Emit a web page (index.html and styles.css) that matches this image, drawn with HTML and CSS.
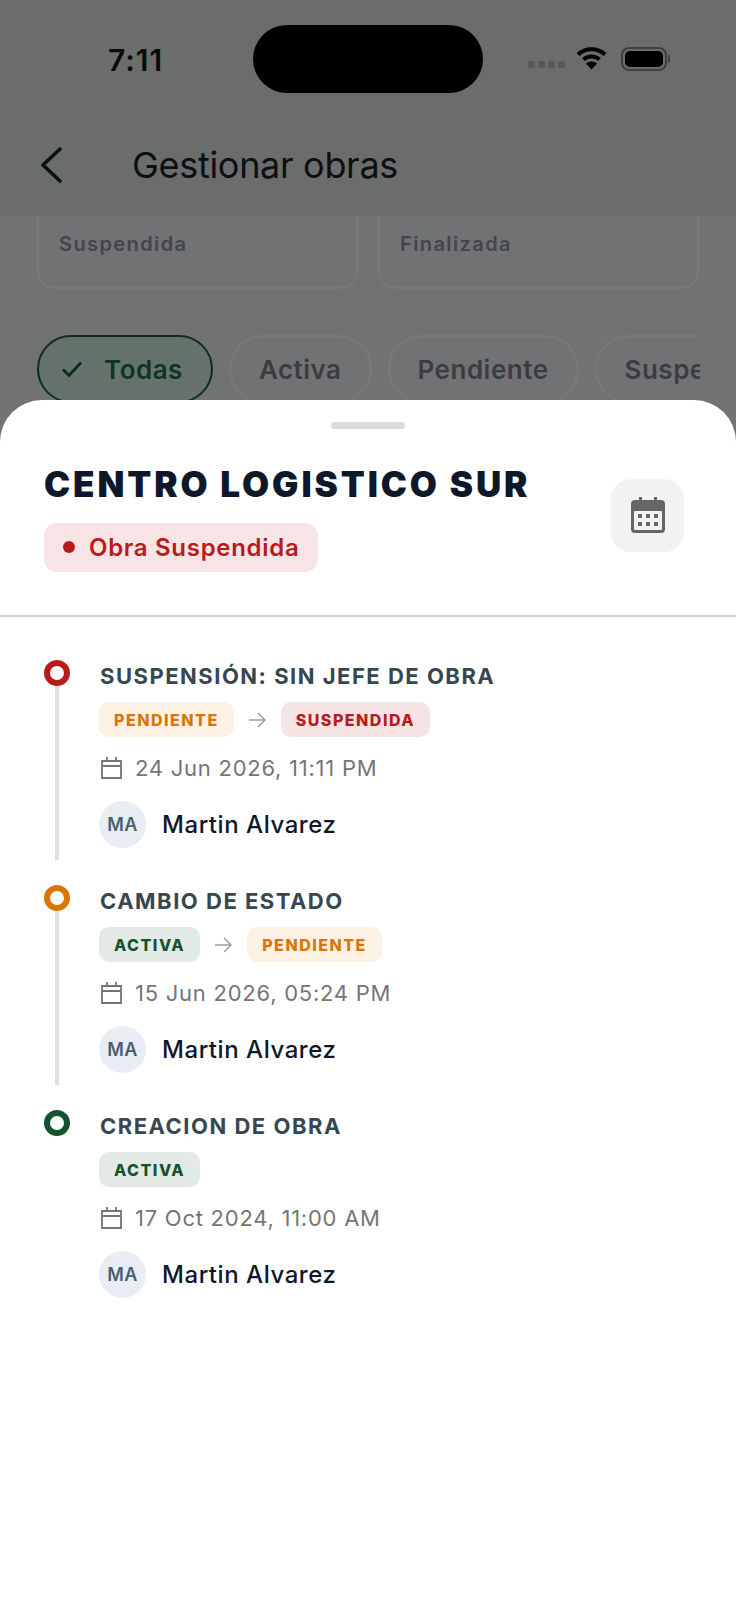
FILE: index.html
```html
<!DOCTYPE html>
<html lang="es">
<head>
<meta charset="UTF-8">
<meta name="viewport" content="width=device-width, initial-scale=1.0">
<title>Gestionar obras</title>
<link rel="stylesheet" href="styles.css">
</head>
<body>
<div class="page">
<div class="top-bar">
<div class="status-bar">
<div class="time">7:11</div>
<div class="island"></div>
<div class="status-icons">
<div class="signal"><span></span><span></span><span></span><span></span></div>
<svg class="wifi" width="31" height="24" viewBox="0 0 31 24"><path d="M2 8.500C9.500 1.500 21.500 1.500 29 8.500" fill="none" stroke="#000" stroke-width="4"/><path d="M7.500 13.500C12 9.500 19 9.500 23.500 13.500" fill="none" stroke="#000" stroke-width="4"/><path d="M15.500 23.500L9.800 17.500C13 14.700 18 14.700 21.200 17.500Z" fill="#000"/></svg>
<div class="battery"><div class="battery-fill"></div></div>
<div class="battery-cap"></div>
</div>
</div>
<div class="nav-bar">
<svg class="back" width="22" height="36" viewBox="0 0 22 36"><path d="M20 2L3 18L20 34" fill="none" stroke="#0c0f14" stroke-width="3.600" stroke-linecap="round" stroke-linejoin="round"/></svg>
<div class="nav-title">Gestionar obras</div>
</div>
</div>

<div class="backdrop">
<div class="summary">
<div class="summary-card">Suspendida</div>
<div class="summary-card">Finalizada</div>
</div>
<div class="filters">
<div class="filter filter-on">
<svg width="24" height="20" viewBox="0 0 24 20"><path d="M3 10.500L9 16.500L21 3.500" fill="none" stroke="#0c2b19" stroke-width="2.800"/></svg>
Todas
</div>
<div class="filter">Activa</div>
<div class="filter">Pendiente</div>
<div class="filter">Suspendida</div>
</div>
</div>

<div class="sheet">
<div class="handle"></div>
<div class="sheet-head">
<div>
<h1 class="sheet-title">CENTRO LOGISTICO SUR</h1>
<div class="sheet-tag"><span class="tag-dot"></span>Obra Suspendida</div>
</div>
<div class="icon-btn">
<svg width="34" height="36" viewBox="0 0 34 36">
<path d="M8 0h3v5H8zM23 0h3v5h-3z" fill="#666"/>
<rect x="0" y="3" width="34" height="33" rx="4" fill="#666"/>
<rect x="3" y="14" width="28" height="19" rx="1" fill="#f2f2f2"/>
<path d="M7 17h4v4H7zM15 17h4v4h-4zM23 17h4v4h-4zM7 25h4v4H7zM15 25h4v4h-4zM23 25h4v4h-4z" fill="#666"/>
</svg>
</div>
</div>

<div class="timeline">
<div class="event">
<div class="rail"><div class="dot dot-red"></div><div class="line"></div></div>
<div class="event-body">
<div class="event-title">SUSPENSIÓN: SIN JEFE DE OBRA</div>
<div class="chips">
<span class="chip chip-orange">PENDIENTE</span>
<svg class="arrow" width="17" height="16" viewBox="0 0 17 16"><path d="M0 8H16M9 1L16 8L9 15" fill="none" stroke="#9e9e9e" stroke-width="1.500"/></svg>
<span class="chip chip-red">SUSPENDIDA</span>
</div>
<div class="date">
<svg width="21" height="22" viewBox="0 0 21 22"><path d="M1 4H20V21H1ZM1 9H20M6 0V5M15 0V5" fill="none" stroke="#757575" stroke-width="1.800"/></svg>
24 Jun 2026, 11:11 PM
</div>
<div class="user"><div class="avatar">MA</div>Martin Alvarez</div>
</div>
</div>

<div class="event">
<div class="rail"><div class="dot dot-orange"></div><div class="line"></div></div>
<div class="event-body">
<div class="event-title">CAMBIO DE ESTADO</div>
<div class="chips">
<span class="chip chip-green">ACTIVA</span>
<svg class="arrow" width="17" height="16" viewBox="0 0 17 16"><path d="M0 8H16M9 1L16 8L9 15" fill="none" stroke="#9e9e9e" stroke-width="1.500"/></svg>
<span class="chip chip-orange">PENDIENTE</span>
</div>
<div class="date">
<svg width="21" height="22" viewBox="0 0 21 22"><path d="M1 4H20V21H1ZM1 9H20M6 0V5M15 0V5" fill="none" stroke="#757575" stroke-width="1.800"/></svg>
15 Jun 2026, 05:24 PM
</div>
<div class="user"><div class="avatar">MA</div>Martin Alvarez</div>
</div>
</div>

<div class="event">
<div class="rail"><div class="dot dot-green"></div></div>
<div class="event-body">
<div class="event-title">CREACION DE OBRA</div>
<div class="chips">
<span class="chip chip-green">ACTIVA</span>
</div>
<div class="date">
<svg width="21" height="22" viewBox="0 0 21 22"><path d="M1 4H20V21H1ZM1 9H20M6 0V5M15 0V5" fill="none" stroke="#757575" stroke-width="1.800"/></svg>
17 Oct 2024, 11:00 AM
</div>
<div class="user"><div class="avatar">MA</div>Martin Alvarez</div>
</div>
</div>
</div>
</div>
</div>
</body>
</html>
```

FILE: styles.css
```css
:root {
--red: #b71c1c;
--orange: #d97706;
--green: #14532d;
--ink: #0f172a;
--muted: #757575;
}

* {
box-sizing: border-box;
}

body {
margin: 0;
font-family: Inter, "Noto Sans", sans-serif;
background-color: #717274;
}

.page {
width: 736px;
height: 1600px;
overflow: hidden;
display: flex;
flex-direction: column;
}

.top-bar {
height: 216px;
background-color: #6b6d6c;
flex-shrink: 0;
position: relative;
z-index: 1;
}

.status-bar {
height: 118px;
display: flex;
padding-top: 25px;
position: relative;
}

.time {
width: 253px;
padding: 17px 0 0 108px;
font-size: 30px;
line-height: 36px;
font-weight: 600;
letter-spacing: 1px;
color: #0a0a0a;
}

.island {
width: 230px;
height: 68px;
border-radius: 34px;
background: #000;
}

.status-icons {
display: flex;
align-items: center;
height: 68px;
margin-left: 45px;
}

.signal {
display: flex;
gap: 3px;
margin-top: 10px;
}

.signal span {
width: 7px;
height: 7px;
border-radius: 2px;
background: #575859;
}

.wifi {
margin: -2px 0 0 11px;
}

.battery {
width: 46px;
height: 24px;
margin: -1px 0 0 14px;
border: 2px solid #3f3f3f;
border-radius: 8px;
padding: 2px;
}

.battery-fill {
height: 100%;
border-radius: 5px;
background: #000;
}

.battery-cap {
width: 2px;
height: 8px;
margin: -1px 0 0 1px;
border-radius: 0 2px 2px 0;
background: #3f3f3f;
}

.nav-bar {
display: flex;
align-items: center;
padding: 23px 0 0 40px;
}

.back {
flex-shrink: 0;
}

.nav-title {
margin-left: 70px;
font-size: 36px;
line-height: 48px;
letter-spacing: -0.3px;
color: #0c0f14;
}

.backdrop {
height: 194px;
padding: 0 37px 0 37px;
overflow: hidden;
flex-shrink: 0;
}

.summary {
display: flex;
gap: 20px;
margin-top: -30px;
height: 103px;
}

.summary-card {
width: 321px;
padding: 44px 0 0 20px;
border: 2px solid #78797b;
border-radius: 18px;
font-size: 20px;
line-height: 24px;
font-weight: 600;
letter-spacing: 1.4px;
color: #44454d;
}

.filters {
display: flex;
gap: 16px;
margin-top: 46px;
width: 663px;
overflow: hidden;
}

.filter {
flex-shrink: 0;
display: flex;
align-items: center;
gap: 20px;
height: 68px;
padding: 0 28px;
border: 2px solid #78797b;
border-radius: 34px;
font-size: 26px;
font-weight: 600;
letter-spacing: 0.5px;
color: #3b3c42;
}

.filter-on {
padding: 0 28px 0 21px;
border-color: #0e2e1b;
background-color: #65736c;
color: #0f3620;
}

.sheet {
flex: 1;
margin-top: -10px;
position: relative;
background: #fff;
border-radius: 42px 42px 0 0;
}

.handle {
width: 74px;
height: 7px;
margin: 22px auto 0;
border-radius: 4px;
background: #dcdcdc;
}

.sheet-head {
display: flex;
justify-content: space-between;
align-items: center;
height: 188px;
padding: 0 52px 10px 44px;
border-bottom: 2px solid #d0d0cc;
}

.sheet-title {
margin: 0;
font-size: 35px;
line-height: 42px;
font-weight: 900;
letter-spacing: 2.9px;
color: var(--ink);
}

.sheet-tag {
display: inline-flex;
align-items: center;
gap: 14px;
height: 49px;
margin-top: 18px;
padding: 0 19px;
border-radius: 13px;
background: #f8e4e4;
font-size: 24px;
font-weight: 600;
letter-spacing: 0.7px;
color: var(--red);
}

.tag-dot {
width: 12px;
height: 12px;
border-radius: 50%;
background: var(--red);
}

.icon-btn {
display: flex;
align-items: center;
justify-content: center;
width: 73px;
height: 73px;
margin-bottom: 4px;
border-radius: 20px;
background: #f2f2f2;
}

.timeline {
padding: 43px 0 0 44px;
}

.event {
display: flex;
height: 225px;
}

.rail {
display: flex;
flex-direction: column;
align-items: center;
width: 26px;
padding-bottom: 25px;
flex-shrink: 0;
}

.dot {
width: 26px;
height: 26px;
border-radius: 50%;
border: 6px solid;
flex-shrink: 0;
}

.dot-red { border-color: var(--red); }
.dot-orange { border-color: var(--orange); }
.dot-green { border-color: var(--green); }

.line {
flex: 1;
width: 4px;
background: #e0e0e0;
}

.event-body {
margin-left: 29px;
}

.event-title {
height: 28px;
margin: 2px 0 0 1px;
font-size: 22px;
line-height: 28px;
font-weight: 700;
letter-spacing: 1.5px;
color: #37474f;
}

.chips {
display: flex;
align-items: center;
gap: 15px;
margin-top: 12px;
}

.chip {
display: block;
height: 35px;
padding: 0 15px;
border-radius: 10px;
font-size: 16px;
line-height: 36px;
font-weight: 800;
letter-spacing: 1.5px;
}

.chip-orange {
background: #fcf1e3;
color: var(--orange);
}

.chip-red {
background: #f6e3e3;
color: var(--red);
}

.chip-green {
background: #e3e9e5;
color: var(--green);
}

.date {
display: flex;
align-items: center;
gap: 13px;
margin: 17px 0 0 2px;
height: 28px;
font-size: 22px;
letter-spacing: 0.75px;
color: var(--muted);
}

.user {
display: flex;
align-items: center;
gap: 16px;
margin-top: 19px;
font-size: 24px;
font-weight: 500;
letter-spacing: 0.55px;
color: var(--ink);
}

.avatar {
display: flex;
align-items: center;
justify-content: center;
width: 47px;
height: 47px;
border-radius: 50%;
background: #e8edf4;
font-size: 18px;
font-weight: 600;
letter-spacing: 0.5px;
color: #4a6070;
}
```
